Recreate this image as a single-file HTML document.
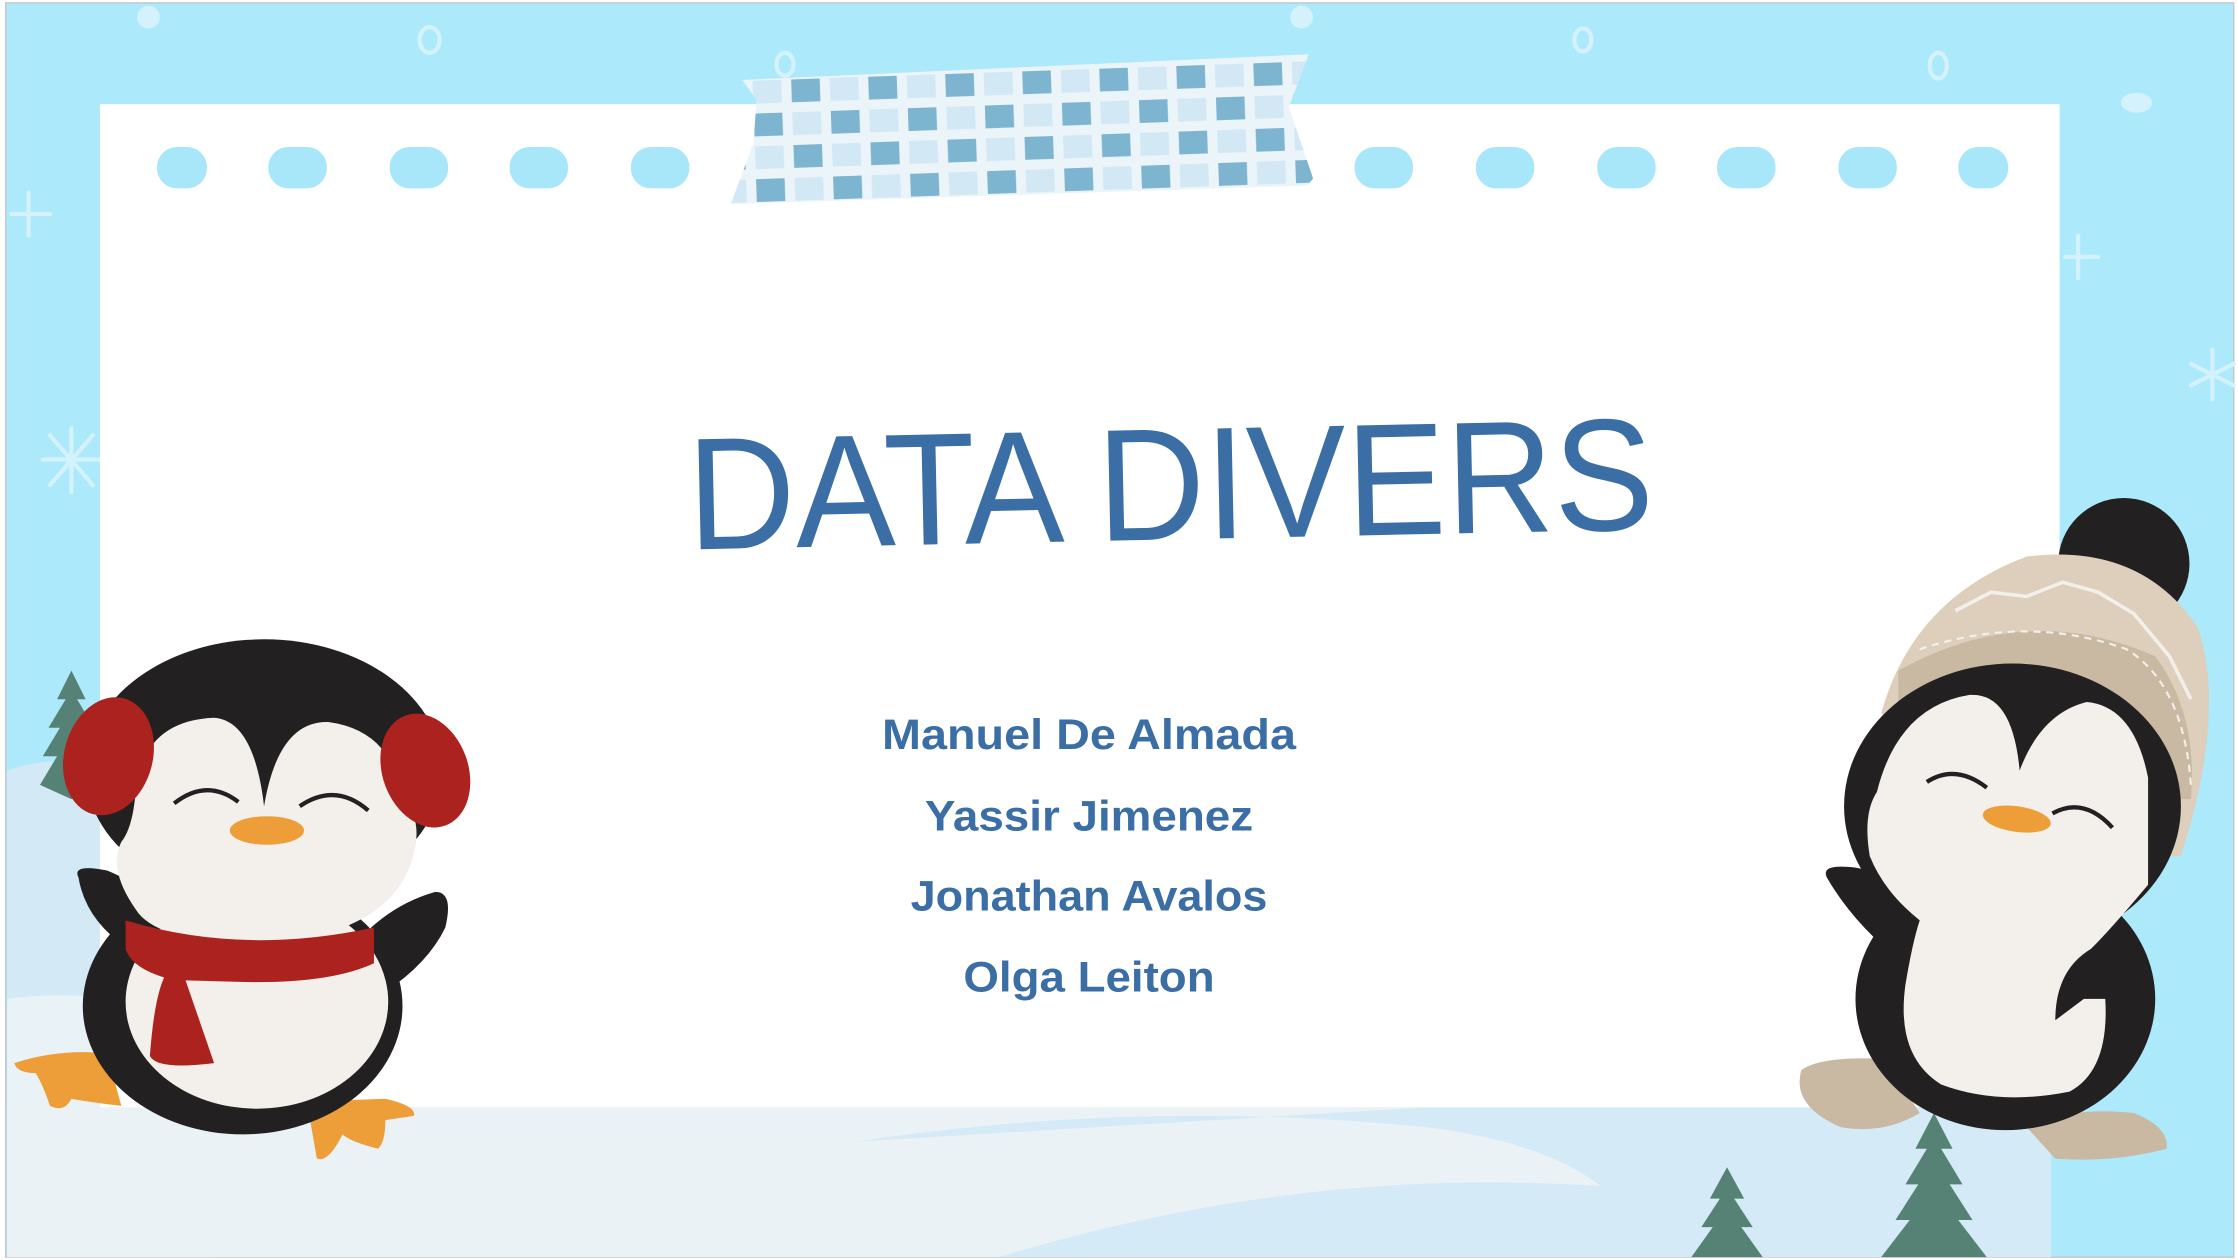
<!DOCTYPE html>
<html><head><meta charset="utf-8"><style>
html,body{margin:0;padding:0;background:#fff;overflow:hidden}
svg{display:block}
</style></head><body>
<svg width="2238" height="1260" viewBox="0 0 1568 883" preserveAspectRatio="none" xmlns="http://www.w3.org/2000/svg">
<defs>
<pattern id="chk" width="54" height="46" patternUnits="userSpaceOnUse" patternTransform="rotate(-2) translate(525 52)">
<rect width="54" height="46" fill="#eaf4f9"/>
<rect x="0" y="0" width="20" height="16" fill="#7db5d0"/>
<rect x="27" y="23" width="20" height="16" fill="#7db5d0"/>
<rect x="27" y="0" width="20" height="16" fill="#d2e8f4"/>
<rect x="0" y="23" width="20" height="16" fill="#d2e8f4"/>
</pattern>
</defs>
<rect width="1568" height="883" fill="#fff"/>
<rect x="4" y="2" width="1561" height="879" fill="#abe9fb" stroke="#c4c8ca" stroke-width="1"/>
<path d="M5 540 Q60 520 120 560 L120 881 L5 881Z" fill="#d3e9f6"/>
<path d="M5 700 Q80 690 150 720 L150 881 L5 881Z" fill="#e9f2f6"/>
<rect x="5" y="776" width="1432" height="105" fill="#eaf2f6"/>
<path d="M600 800 Q800 770 1000 790 Q1080 800 1120 830 Q1160 870 1250 860 L1437 850 L1437 776 L1000 776 Z" fill="#d4eaf6"/>
<path d="M700 881 Q900 820 1100 830 Q1300 840 1437 830 L1437 881Z" fill="#d4eaf6"/>
<path d="M50 470 L60 490 L54 490 L66 510 L58 510 L70 530 L60 530 L72 550 L50 560 L28 550 L40 530 L30 530 L42 510 L34 510 L46 490 L40 490Z" fill="#568275"/>
<path d="M1210 818 L1222 840 L1215 840 L1228 860 L1220 860 L1235 881 L1185 881 L1200 860 L1192 860 L1205 840 L1198 840Z" fill="#568275"/>
<path d="M1355 780 L1368 805 L1360 805 L1375 830 L1366 830 L1382 855 L1372 855 L1392 881 L1318 881 L1338 855 L1328 855 L1344 830 L1335 830 L1350 805 L1342 805Z" fill="#568275"/>
<g fill="none" stroke="#d4f2fc" stroke-width="3" stroke-linecap="round">
<ellipse cx="301" cy="28" rx="7" ry="9"/><ellipse cx="550" cy="45" rx="6" ry="8"/><ellipse cx="1109" cy="28" rx="6" ry="8"/><ellipse cx="1358" cy="46" rx="6" ry="9"/>
<path d="M35 305 L65 340 M35 340 L65 305 M30 322 L70 322 M50 300 L50 345"/>
<path d="M1550 245 L1550 280 M1535 255 L1565 270 M1535 270 L1565 255"/>
<path d="M8 150 L35 150 M20 135 L20 165"/>
<path d="M1447 180 L1470 180 M1456 165 L1456 195"/>
</g>
<g fill="#d4f2fc"><ellipse cx="104" cy="12" rx="8" ry="8"/><ellipse cx="912" cy="12" rx="8" ry="8"/><ellipse cx="1497" cy="72" rx="11" ry="7"/></g>
<rect x="70" y="73" width="1373" height="703" fill="#fff"/>
<g fill="#a8e7f9">
<rect x="110" y="103" width="35" height="29" rx="14"/>
<rect x="188" y="103" width="41" height="29" rx="14"/>
<rect x="273" y="103" width="41" height="29" rx="14"/>
<rect x="357" y="103" width="41" height="29" rx="14"/>
<rect x="442" y="103" width="41" height="29" rx="14"/>
<rect x="949" y="103" width="41" height="29" rx="14"/>
<rect x="1034" y="103" width="41" height="29" rx="14"/>
<rect x="1119" y="103" width="41" height="29" rx="14"/>
<rect x="1203" y="103" width="41" height="29" rx="14"/>
<rect x="1288" y="103" width="41" height="29" rx="14"/>
<rect x="1372" y="103" width="35" height="29" rx="14"/>
</g>
<path d="M520 56 L917 38 L903 75 L920 125 L916 130 L512 143 L528 100 L530 70Z" fill="url(#chk)"/>
<text x="820" y="378" text-anchor="middle" font-family="Liberation Sans, Arial, sans-serif" font-size="112" fill="#3a6ea5" textLength="677" lengthAdjust="spacingAndGlyphs" transform="rotate(-1.2 820 340)">DATA DIVERS</text>
<g font-family="Liberation Sans, Arial, sans-serif" font-weight="bold" font-size="30" fill="#3a6ea5" text-anchor="middle">
<text x="763" y="525" textLength="290" lengthAdjust="spacingAndGlyphs">Manuel De Almada</text>
<text x="763" y="582" textLength="230" lengthAdjust="spacingAndGlyphs">Yassir Jimenez</text>
<text x="763" y="638" textLength="250" lengthAdjust="spacingAndGlyphs">Jonathan Avalos</text>
<text x="763" y="695" textLength="176" lengthAdjust="spacingAndGlyphs">Olga Leiton</text>
</g>
<g>
<path d="M10 745 Q40 735 75 738 L85 775 Q60 772 50 770 Q45 780 35 775 Q30 760 25 752 Q12 752 10 745Z" fill="#ee9e38"/>
<path d="M215 772 L270 770 Q292 775 290 782 L270 785 Q270 800 265 805 Q245 800 240 795 Q230 815 222 812Z" fill="#ee9e38"/>
<path d="M55 615 Q50 605 75 610 Q100 620 115 640 L90 665 Q60 645 55 615Z" fill="#222020"/>
<path d="M305 625 Q318 625 312 650 Q300 675 270 695 L260 650 Q280 632 305 625Z" fill="#222020"/>
<ellipse cx="170" cy="705" rx="112" ry="90" fill="#222020"/>
<ellipse cx="185" cy="540" rx="125" ry="92" fill="#222020"/>
<ellipse cx="180" cy="702" rx="92" ry="75" fill="#f3f0eb"/>
<path d="M95 555 Q100 505 150 503 Q178 505 185 565 Q195 505 230 506 Q275 512 282 560 Q298 575 288 605 Q272 652 190 662 Q115 662 97 640 Q75 610 85 590 Q93 580 95 555Z" fill="#f3f0eb"/>
<path d="M88 645 Q170 670 262 650 L262 675 Q230 690 165 688 L130 687 L150 745 Q110 750 105 740 Q108 700 115 685 Q92 678 88 665Z" fill="#ab221f"/>
<ellipse cx="76" cy="530" rx="31" ry="42" transform="rotate(15 76 530)" fill="#ab221f"/>
<ellipse cx="298" cy="540" rx="30" ry="41" transform="rotate(-20 298 540)" fill="#ab221f"/>
<path d="M122 563 Q145 545 167 562" stroke="#222020" stroke-width="3" fill="none"/>
<path d="M210 565 Q235 548 258 568" stroke="#222020" stroke-width="3" fill="none"/>
<ellipse cx="187" cy="582" rx="26" ry="10" fill="#ee9e38"/>
</g>
<g>
<path d="M1262 750 Q1275 740 1320 742 L1345 780 Q1320 795 1290 790 Q1255 775 1262 750Z" fill="#c9b8a2"/>
<path d="M1420 790 Q1450 775 1495 780 Q1520 790 1518 805 Q1480 815 1440 812Z" fill="#c9b8a2"/>
<path d="M1280 615 Q1275 605 1300 608 Q1325 612 1340 630 L1340 680 Q1300 650 1280 615Z" fill="#222020"/>
<ellipse cx="1405" cy="700" rx="105" ry="92" fill="#222020"/>
<circle cx="1488" cy="395" r="46" fill="#222020"/>
<path d="M1318 500 Q1340 420 1420 390 Q1500 380 1540 440 Q1560 500 1528 600 L1500 600 Q1450 470 1330 510Z" fill="#ddcfbb"/>
<path d="M1330 470 Q1420 420 1510 460 Q1540 500 1535 560 L1515 560 Q1500 480 1420 465 Q1360 465 1330 495Z" fill="#c9b8a2"/>
<path d="M1345 455 Q1420 430 1490 455 Q1530 480 1535 550" stroke="#f3f0eb" stroke-width="1.5" stroke-dasharray="5 4" fill="none"/>
<path d="M1370 428 L1395 415 L1420 418 L1445 408 L1470 415 L1495 430 L1520 460 L1535 490" stroke="#f3f0eb" stroke-width="2.5" fill="none"/>
<ellipse cx="1410" cy="565" rx="118" ry="100" fill="#222020"/>
<path d="M1315 555 Q1330 495 1380 487 Q1410 485 1415 540 Q1430 500 1462 492 Q1495 495 1505 545 L1505 620 Q1480 650 1465 665 Q1440 680 1440 715 L1460 700 L1475 700 Q1478 750 1450 765 Q1400 775 1360 760 Q1328 740 1335 690 Q1340 660 1345 645 Q1320 625 1310 600 Q1305 570 1315 555Z" fill="#f3f0eb"/>
<path d="M1350 548 Q1370 535 1392 552" stroke="#222020" stroke-width="3" fill="none"/>
<path d="M1438 570 Q1460 558 1480 580" stroke="#222020" stroke-width="3" fill="none"/>
<ellipse cx="1413" cy="574" rx="24" ry="9" transform="rotate(8 1413 574)" fill="#ee9e38"/>
</g>
</svg>
</body></html>
